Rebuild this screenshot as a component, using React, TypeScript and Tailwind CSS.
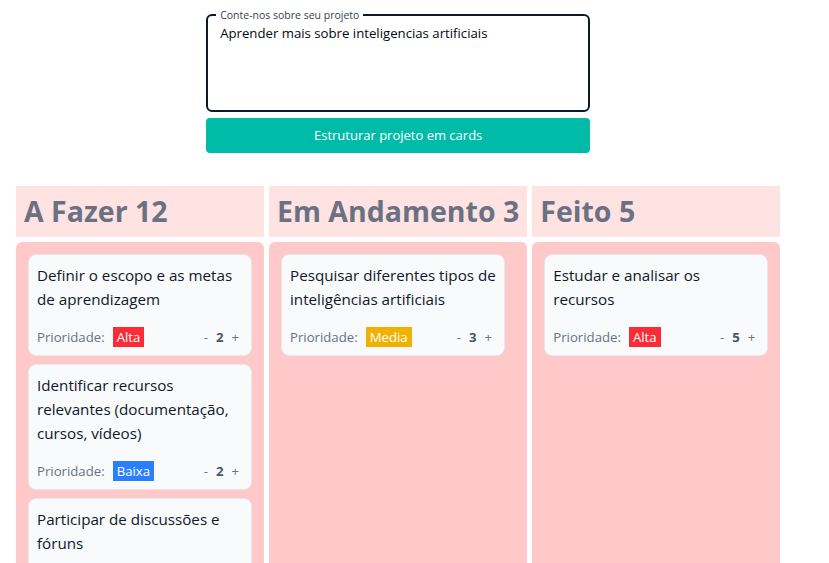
import React, { useState } from 'react';

type Priority = 'Alta' | 'Media' | 'Baixa';

interface Task {
  id: number;
  title: string;
  priority: Priority;
  count: number;
}

const badgeColors: Record<Priority, string> = {
  Alta: 'bg-red-500',
  Media: 'bg-yellow-500',
  Baixa: 'bg-blue-500',
};

const TaskCard: React.FC<{ task: Task; onChange: (delta: number) => void }> = ({ task, onChange }) => (
  <div className="bg-slate-50 border border-gray-200 rounded-lg px-2 pt-2 pb-2">
    <p className="text-[15.2px] leading-6 text-gray-900">{task.title}</p>
    <div className="mt-4 flex items-center text-[13.2px] leading-5">
      <span className="text-gray-500">Prioridade:</span>
      <span className={`ml-2 px-1 text-white ${badgeColors[task.priority]}`}>{task.priority}</span>
      <div className="ml-auto flex items-center gap-2 pr-1 text-gray-500">
        <button className="text-gray-500" onClick={() => onChange(-1)}>-</button>
        <span className="font-bold text-gray-600">{task.count}</span>
        <button className="text-gray-500" onClick={() => onChange(1)}>+</button>
      </div>
    </div>
  </div>
);

const App: React.FC = () => {
  const [idea, setIdea] = useState('Aprender mais sobre inteligencias artificiais');
  const [columns, setColumns] = useState<{ title: string; tasks: Task[] }[]>([
    {
      title: 'A Fazer',
      tasks: [
        { id: 1, title: 'Definir o escopo e as metas de aprendizagem', priority: 'Alta', count: 2 },
        { id: 2, title: 'Identificar recursos relevantes (documentação, cursos, vídeos)', priority: 'Baixa', count: 2 },
        { id: 3, title: 'Participar de discussões e fóruns', priority: 'Media', count: 2 },
        { id: 4, title: 'Praticar com pequenos projetos', priority: 'Alta', count: 3 },
        { id: 5, title: 'Revisar e documentar o aprendizado', priority: 'Baixa', count: 3 },
      ],
    },
    {
      title: 'Em Andamento',
      tasks: [{ id: 6, title: 'Pesquisar diferentes tipos de inteligências artificiais', priority: 'Media', count: 3 }],
    },
    {
      title: 'Feito',
      tasks: [{ id: 7, title: 'Estudar e analisar os recursos', priority: 'Alta', count: 5 }],
    },
  ]);

  const updateCount = (col: number, id: number, delta: number) => {
    setColumns(prev =>
      prev.map((c, i) =>
        i !== col
          ? c
          : { ...c, tasks: c.tasks.map(t => (t.id === id ? { ...t, count: Math.max(0, t.count + delta) } : t)) }
      )
    );
  };

  return (
    <div className="w-fit px-4 pt-[7px] pb-4 flex flex-col items-center" style={{ fontFamily: '"Open Sans", "Noto Sans", sans-serif' }}>
      {/* Form */}
      <fieldset className="w-96 border-2 border-gray-900 rounded-md pl-2 pr-2 pb-[6px]">
        <legend className="px-1 text-[10.5px] leading-4 text-gray-700">Conte-nos sobre seu projeto</legend>
        <textarea
          value={idea}
          onChange={e => setIdea(e.target.value)}
          spellCheck
          className="block w-full h-[81px] px-1 text-[13.2px] leading-5 text-gray-950 resize-none outline-none bg-transparent"
        />
      </fieldset>
      <button className="mt-[6px] w-96 h-[35px] bg-teal-500 text-white text-[13px] rounded">
        Estruturar projeto em cards
      </button>

      {/* Board */}
      <div className="mt-[33px] flex gap-[5px] self-stretch">
        {columns.map((col, ci) => (
          <div key={col.title} className="min-w-[248px] flex flex-col gap-[5px]">
            <h2 className="bg-red-100 px-2 py-2 text-[28.5px] leading-[35px] font-bold text-gray-500 whitespace-nowrap">
              {col.title} {col.tasks.reduce((s, t) => s + t.count, 0)}
            </h2>
            <div className="flex-1 bg-red-200 rounded-t-md p-3 flex flex-col gap-2">
              {col.tasks.map(t => (
                <div key={t.id} className="w-[224px]">
                  <TaskCard task={t} onChange={d => updateCount(ci, t.id, d)} />
                </div>
              ))}
            </div>
          </div>
        ))}
      </div>
    </div>
  );
};

export default App;
